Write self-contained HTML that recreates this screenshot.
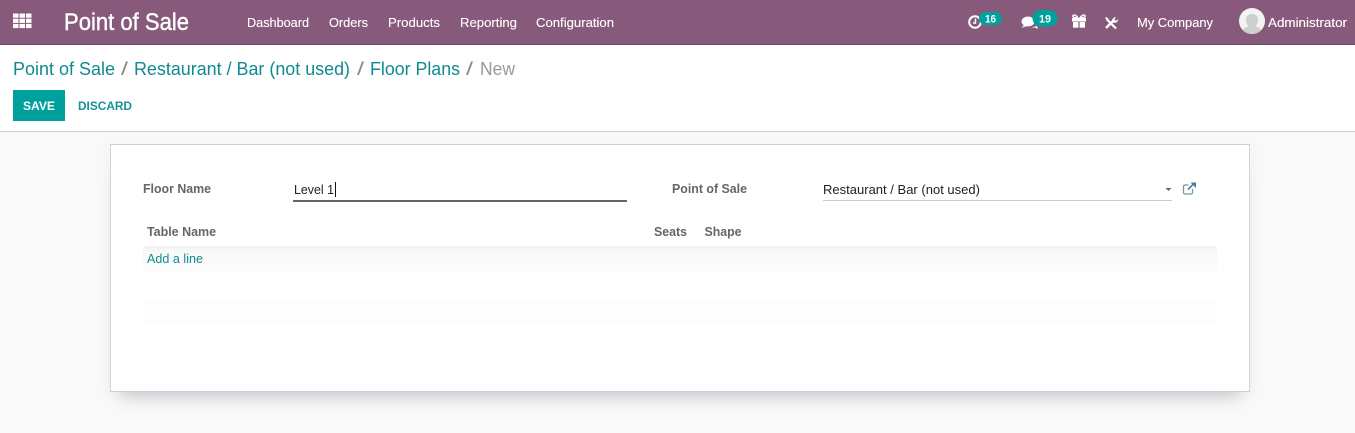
<!DOCTYPE html>
<html lang="en">
<head>
<meta charset="utf-8">
<title>Point of Sale</title>
<style>
html,body{margin:0;padding:0;width:1355px;height:433px;overflow:hidden;background:#f9f9f9}
.abs{position:absolute}
#nav{left:0;top:0;width:1355px;height:44px;background:#875a7b;border-bottom:1px solid #6f4a65}
#cp{left:0;top:45px;width:1355px;height:86px;background:#fff;border-bottom:1px solid #ccc}
#save{left:13px;top:90px;width:52px;height:31px;background:#00a09d}
#card{left:110px;top:144px;width:1138px;height:246px;background:#fff;border:1px solid #ccd3e0;border-bottom-color:#c9ced8;box-shadow:0 4px 18px rgba(0,0,0,.035),0 15px 16px -11px rgba(50,55,70,.24)}
#row1{left:143px;top:246px;width:1074px;height:26px;background:linear-gradient(#f1f1f1 0,#f9f9f9 5px,#fcfcfc 100%)}
#row2{left:143px;top:300px;width:1074px;height:25px;background:#fdfdfd}
#u1{left:293px;top:200px;width:334px;height:2px;background:#666}
#u2{left:823px;top:200px;width:349px;height:1px;background:#ccc}
svg{position:absolute;left:0;top:0}
text{font-family:"Liberation Sans",sans-serif}
</style>
</head>
<body>
<div class="abs" id="nav"></div>
<div class="abs" id="cp"></div>
<div class="abs" id="save"></div>
<div class="abs" id="card"></div>
<div class="abs" id="row1"></div>
<div class="abs" id="row2"></div>
<div class="abs" id="u1"></div>
<div class="abs" id="u2"></div>
<svg width="1355" height="433" viewBox="0 0 1355 433">
  <defs><clipPath id="av"><circle cx="1252" cy="21" r="13"/></clipPath></defs>
  <!-- apps grid -->
  <g fill="#fff">
    <rect x="13" y="13.500" width="5.500" height="4.200"/><rect x="19.500" y="13.500" width="5.500" height="4.200"/><rect x="26" y="13.500" width="5.500" height="4.200"/>
    <rect x="13" y="18.700" width="5.500" height="4.200"/><rect x="19.500" y="18.700" width="5.500" height="4.200"/><rect x="26" y="18.700" width="5.500" height="4.200"/>
    <rect x="13" y="23.900" width="5.500" height="4.200"/><rect x="19.500" y="23.900" width="5.500" height="4.200"/><rect x="26" y="23.900" width="5.500" height="4.200"/>
  </g>
  <g fill="#fff">
    <text x="64" y="30" font-size="24" stroke="#fff" stroke-width=".4" textLength="125" lengthAdjust="spacingAndGlyphs">Point of Sale</text>
    <g font-size="13" stroke="#fff" stroke-width=".12">
      <text x="247" y="27" textLength="62" lengthAdjust="spacingAndGlyphs">Dashboard</text>
      <text x="329" y="27" textLength="39" lengthAdjust="spacingAndGlyphs">Orders</text>
      <text x="388" y="27" textLength="52" lengthAdjust="spacingAndGlyphs">Products</text>
      <text x="460" y="27" textLength="57" lengthAdjust="spacingAndGlyphs">Reporting</text>
      <text x="536" y="27" textLength="78" lengthAdjust="spacingAndGlyphs">Configuration</text>
      <text x="1137" y="27" textLength="76" lengthAdjust="spacingAndGlyphs">My Company</text>
      <text x="1268" y="27" textLength="79" lengthAdjust="spacingAndGlyphs">Administrator</text>
    </g>
  </g>
  <!-- clock -->
  <circle cx="975" cy="22" r="5.800" fill="none" stroke="#fff" stroke-width="2"/>
  <path d="M975.500 18.500v4.500h-2.500" fill="none" stroke="#fff" stroke-width="1.400"/>
  <rect x="979" y="12" width="23" height="13" rx="6.500" fill="#00a09d"/>
  <text x="990.500" y="22.300" font-size="11" font-weight="bold" fill="#fff" text-anchor="middle" textLength="11" lengthAdjust="spacingAndGlyphs">16</text>
  <!-- chat -->
  <ellipse cx="1028" cy="21.500" rx="6.500" ry="5" fill="#fff"/>
  <path d="M1024 25l-2.500 3 5.500-2z" fill="#fff"/>
  <path d="M1031 27.500h4l3 1.500-1-3z" fill="#fff"/>
  <rect x="1032.500" y="10" width="25" height="16.500" rx="8.250" fill="#00a09d"/>
  <text x="1045" y="22.500" font-size="11" font-weight="bold" fill="#fff" text-anchor="middle" textLength="12" lengthAdjust="spacingAndGlyphs">19</text>
  <!-- gift -->
  <g fill="#fff">
    <rect x="1072" y="18" width="14" height="3.500"/>
    <rect x="1073" y="22" width="5.400" height="5.700"/>
    <rect x="1079.600" y="22" width="5.400" height="5.700"/>
    <path d="M1078 18c-1.500-2.800-4-3.800-5-2.500s1 2.500 5 2.500zM1080 18c1.500-2.800 4-3.800 5-2.500s-1 2.500-5 2.500z" fill="none" stroke="#fff" stroke-width="1.400"/>
  </g>
  <!-- tools -->
  <path d="M1107 19.500l9 9" fill="none" stroke="#fff" stroke-width="2.200"/>
  <path d="M1106 28l7.500-7.500" fill="none" stroke="#fff" stroke-width="2.400"/>
  <path d="M1112.500 21.500c-.8-2.400 1-4.600 3.800-4.200l-2 2 1.700 1.700 1.900-1.900c.4 2.700-2 4.400-4.400 3.400z" fill="#fff"/>
  <path d="M1105 18l1.500-1 2 2-1.500 1.500z" fill="#fff"/>
  <!-- avatar -->
  <circle cx="1252" cy="21" r="13" fill="#f3f3f3"/>
  <path clip-path="url(#av)" d="M1241 36c.5-7 4-8.500 7.500-10-1.500-1.500-2.500-3.500-2.500-6.500 0-3.300 2.500-5.500 6-5.500s6 2.200 6 5.500c0 3-1 5-2.500 6.500 3.500 1.500 7 3 7.500 10z" fill="#cfcfcf"/>
  <!-- breadcrumb -->
  <g font-size="18" fill="#0f8a8f">
    <text x="13" y="75" textLength="102" lengthAdjust="spacingAndGlyphs">Point of Sale</text>
    <text x="134" y="75" textLength="216" lengthAdjust="spacingAndGlyphs">Restaurant / Bar (not used)</text>
    <text x="370" y="75" textLength="90" lengthAdjust="spacingAndGlyphs">Floor Plans</text>
  </g>
  <g font-size="18" fill="#8a8a8a">
    <text x="121" y="75" textLength="7" lengthAdjust="spacingAndGlyphs">/</text>
    <text x="357" y="75" textLength="7" lengthAdjust="spacingAndGlyphs">/</text>
    <text x="466" y="75" textLength="7" lengthAdjust="spacingAndGlyphs">/</text>
  </g>
  <text x="480" y="75" font-size="18" fill="#999" textLength="35" lengthAdjust="spacingAndGlyphs">New</text>
  <!-- buttons -->
  <text x="23" y="110" font-size="12" font-weight="bold" fill="#fff" textLength="32" lengthAdjust="spacingAndGlyphs">SAVE</text>
  <text x="78" y="110" font-size="12" font-weight="bold" fill="#17929a" textLength="54" lengthAdjust="spacingAndGlyphs">DISCARD</text>
  <!-- form -->
  <g font-size="13" font-weight="bold" fill="#666">
    <text x="143" y="193" textLength="68" lengthAdjust="spacingAndGlyphs">Floor Name</text>
    <text x="672" y="193" textLength="75" lengthAdjust="spacingAndGlyphs">Point of Sale</text>
    <text x="147" y="236" textLength="69" lengthAdjust="spacingAndGlyphs">Table Name</text>
    <text x="654" y="236" textLength="33" lengthAdjust="spacingAndGlyphs">Seats</text>
    <text x="704.500" y="236" textLength="37" lengthAdjust="spacingAndGlyphs">Shape</text>
  </g>
  <text x="294" y="194" font-size="13" fill="#222" textLength="40" lengthAdjust="spacingAndGlyphs">Level 1</text>
  <rect x="335" y="182" width="1" height="15" fill="#111"/>
  <text x="823" y="194" font-size="13" fill="#222" textLength="157" lengthAdjust="spacingAndGlyphs">Restaurant / Bar (not used)</text>
  <path d="M1165.500 188h6l-3 3z" fill="#666"/>
  <!-- external link -->
  <path d="M1192.500 189v3.500a1.500 1.500 0 0 1-1.500 1.500h-6a1.500 1.500 0 0 1-1.500-1.500v-6a1.500 1.500 0 0 1 1.500-1.500h3.500" fill="none" stroke="#6f97a8" stroke-width="1.300"/>
  <path d="M1188 189.500l5.500-5.500" fill="none" stroke="#4f7f8f" stroke-width="1.600"/>
  <path d="M1190.500 182.500h5.500v5.500z" fill="#4f7f8f"/>
  <text x="147" y="263" font-size="13" fill="#0f8a8f" textLength="56" lengthAdjust="spacingAndGlyphs">Add a line</text>
</svg>
</body>
</html>
